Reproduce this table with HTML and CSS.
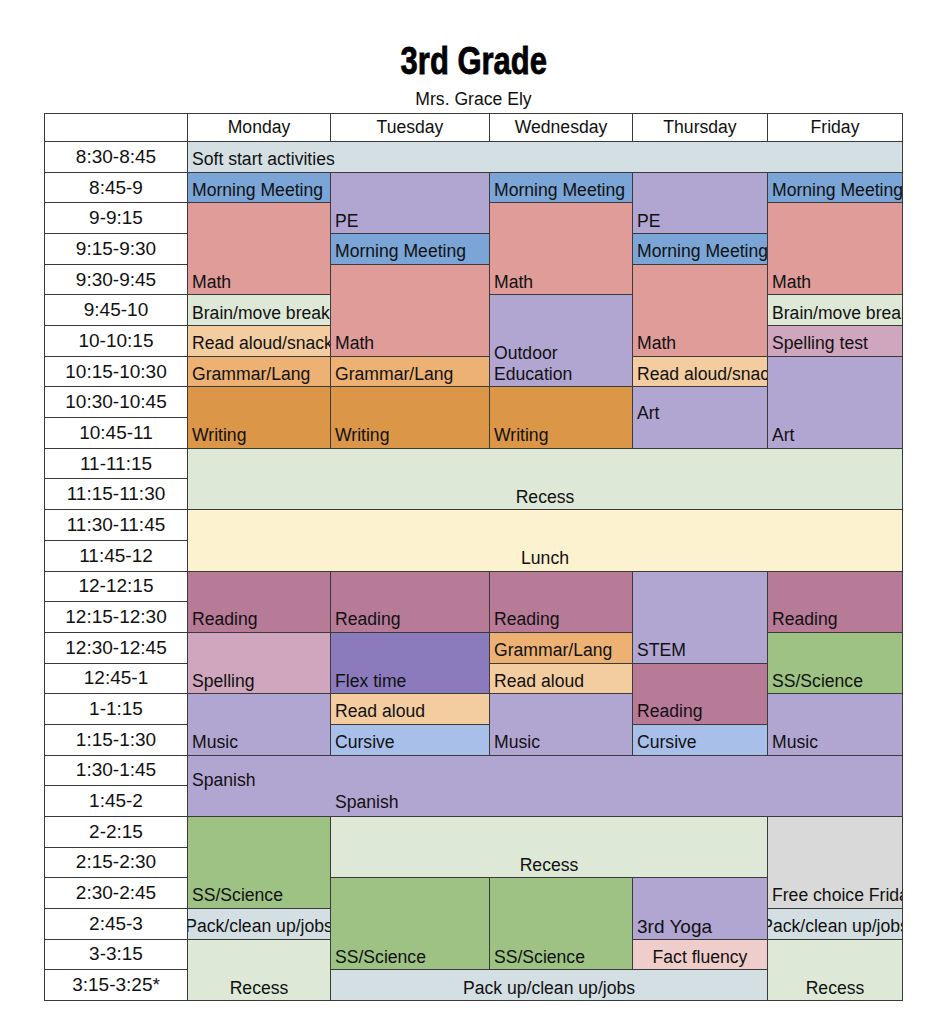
FILE: index.html
```html
<!DOCTYPE html>
<html lang="en">
<head>
<meta charset="utf-8">
<title>3rd Grade</title>
<link rel="stylesheet" href="styles.css">
</head>
<body>
<div class="page">
  <h1 class="title"><span class="title-text">3rd Grade</span></h1>
  <div class="subtitle">Mrs. Grace Ely</div>
  <div class="schedule">
    <div class="head"></div>
    <div class="head">Monday</div>
    <div class="head">Tuesday</div>
    <div class="head">Wednesday</div>
    <div class="head">Thursday</div>
    <div class="head">Friday</div>

    <div class="time">8:30-8:45</div>
    <div class="cell soft w5"><span>Soft start activities</span></div>

    <div class="time">8:45-9</div>
    <div class="cell meet"><span>Morning Meeting</span></div>
    <div class="cell purple h2"><span>PE</span></div>
    <div class="cell meet"><span>Morning Meeting</span></div>
    <div class="cell purple h2"><span>PE</span></div>
    <div class="cell meet"><span>Morning Meeting</span></div>

    <div class="time">9-9:15</div>
    <div class="cell math h3"><span>Math</span></div>
    <div class="cell math h3"><span>Math</span></div>
    <div class="cell math h3"><span>Math</span></div>

    <div class="time">9:15-9:30</div>
    <div class="cell meet"><span>Morning Meeting</span></div>
    <div class="cell meet"><span>Morning Meeting</span></div>

    <div class="time">9:30-9:45</div>
    <div class="cell math h3"><span>Math</span></div>
    <div class="cell math h3"><span>Math</span></div>

    <div class="time">9:45-10</div>
    <div class="cell mint"><span>Brain/move break</span></div>
    <div class="cell purple h3"><span>Outdoor<br>Education</span></div>
    <div class="cell mint"><span>Brain/move break</span></div>

    <div class="time">10-10:15</div>
    <div class="cell snack"><span>Read aloud/snack</span></div>
    <div class="cell pink"><span>Spelling test</span></div>

    <div class="time">10:15-10:30</div>
    <div class="cell gram"><span>Grammar/Lang</span></div>
    <div class="cell gram"><span>Grammar/Lang</span></div>
    <div class="cell snack"><span>Read aloud/snack</span></div>
    <div class="cell purple h3"><span>Art</span></div>

    <div class="time">10:30-10:45</div>
    <div class="cell write h2"><span>Writing</span></div>
    <div class="cell write h2"><span>Writing</span></div>
    <div class="cell write h2"><span>Writing</span></div>
    <div class="cell purple h2 mid"><span>Art</span></div>

    <div class="time">10:45-11</div>

    <div class="time">11-11:15</div>
    <div class="cell mint w5 h2 center"><span>Recess</span></div>

    <div class="time">11:15-11:30</div>

    <div class="time">11:30-11:45</div>
    <div class="cell lunch w5 h2 center"><span>Lunch</span></div>

    <div class="time">11:45-12</div>

    <div class="time">12-12:15</div>
    <div class="cell read h2"><span>Reading</span></div>
    <div class="cell read h2"><span>Reading</span></div>
    <div class="cell read h2"><span>Reading</span></div>
    <div class="cell purple h3"><span>STEM</span></div>
    <div class="cell read h2"><span>Reading</span></div>

    <div class="time">12:15-12:30</div>

    <div class="time">12:30-12:45</div>
    <div class="cell pink h2"><span>Spelling</span></div>
    <div class="cell flex h2"><span>Flex time</span></div>
    <div class="cell gram"><span>Grammar/Lang</span></div>
    <div class="cell green h2"><span>SS/Science</span></div>

    <div class="time">12:45-1</div>
    <div class="cell snack"><span>Read aloud</span></div>
    <div class="cell read h2"><span>Reading</span></div>

    <div class="time">1-1:15</div>
    <div class="cell purple h2"><span>Music</span></div>
    <div class="cell snack"><span>Read aloud</span></div>
    <div class="cell purple h2"><span>Music</span></div>
    <div class="cell purple h2"><span>Music</span></div>

    <div class="time">1:15-1:30</div>
    <div class="cell cursive"><span>Cursive</span></div>
    <div class="cell cursive"><span>Cursive</span></div>

    <div class="time">1:30-1:45</div>
    <div class="cell purple w5 h2 spanish">
      <div class="spanish-mon"><span>Spanish</span></div>
      <div class="spanish-rest"><span>Spanish</span></div>
    </div>

    <div class="time">1:45-2</div>

    <div class="time">2-2:15</div>
    <div class="cell green h3"><span>SS/Science</span></div>
    <div class="cell mint w3 h2 center"><span>Recess</span></div>
    <div class="cell gray h3"><span>Free choice Friday</span></div>

    <div class="time">2:15-2:30</div>

    <div class="time">2:30-2:45</div>
    <div class="cell green h3"><span>SS/Science</span></div>
    <div class="cell green h3"><span>SS/Science</span></div>
    <div class="cell purple h2 big"><span>3rd Yoga</span></div>

    <div class="time">2:45-3</div>
    <div class="cell soft center"><span>Pack/clean up/jobs</span></div>
    <div class="cell soft center"><span>Pack/clean up/jobs</span></div>

    <div class="time">3-3:15</div>
    <div class="cell mint h2 center"><span>Recess</span></div>
    <div class="cell rose center"><span>Fact fluency</span></div>
    <div class="cell mint h2 center"><span>Recess</span></div>

    <div class="time">3:15-3:25*</div>
    <div class="cell soft w3 center"><span>Pack up/clean up/jobs</span></div>
  </div>
</div>
</body>
</html>
```

FILE: styles.css
```css
* { box-sizing: border-box; }

body {
  margin: 0;
  background: #ffffff;
  color: #111111;
  font-family: "Liberation Sans", Arial, sans-serif;
}

.page {
  width: 903px;
  padding: 41px 0 0 44px;
}

.title {
  margin: 0;
  font-family: "Liberation Sans", Arial, sans-serif;
  font-weight: 700;
  font-size: 38px;
  line-height: 40px;
  text-align: center;
  color: #000;
}

.title-text {
  display: inline-block;
  transform: scaleX(0.815);
  -webkit-text-stroke: 0.8px #000;
}

.subtitle {
  margin-top: 8px;
  font-size: 17.6px;
  line-height: 20px;
  text-align: center;
  color: #111;
}

.schedule {
  margin-top: 4px;
  width: 859px;
  height: 888px;
  display: grid;
  grid-template-columns: 142px 142px 158px 142px 134px 134px;
  grid-template-rows: 27px repeat(28, 1fr);
  gap: 1px;
  padding: 1px;
  background: #3a3a3a;
  font-size: 17.6px;
}

.head {
  background: #fff;
  display: flex;
  align-items: center;
  justify-content: center;
  padding-bottom: 1px;
}

.time {
  grid-column: 1;
  background: #fff;
  display: flex;
  align-items: center;
  justify-content: center;
  font-size: 19px;
  white-space: nowrap;
}

.cell {
  display: flex;
  align-items: flex-end;
  justify-content: flex-start;
  padding: 0 4px 1.5px;
  line-height: 21px;
  overflow: hidden;
  white-space: nowrap;
}

.cell span { flex: none; }

.center { justify-content: center; }
.mid { align-items: center; padding-bottom: 9px; }
.big { font-size: 19px; }

.w5 { grid-column: span 5; }
.w3 { grid-column: span 3; }
.h2 { grid-row: span 2; }
.h3 { grid-row: span 3; }

.soft { background: #d4dfe3; }
.meet { background: #7ba5d6; }
.purple { background: #b1a6d2; }
.math { background: #df9c99; }
.mint { background: #dde8d6; }
.snack { background: #f3cd9f; }
.gram { background: #edb273; }
.write { background: #db9647; }
.lunch { background: #fdf2d0; }
.read { background: #b77b98; }
.pink { background: #cfa6bd; }
.flex { background: #8b7bbd; }
.cursive { background: #a8bfea; }
.green { background: #9dc284; }
.gray { background: #d9d9d9; }
.rose { background: #efcdcb; }

.spanish {
  display: grid;
  grid-template-columns: 143px 1fr;
  align-items: stretch;
  padding: 0;
}

.spanish-mon {
  display: flex;
  align-items: center;
  padding: 0 4px 10px;
}

.spanish-rest {
  display: flex;
  align-items: flex-end;
  padding: 0 4px 3px;
}
```
